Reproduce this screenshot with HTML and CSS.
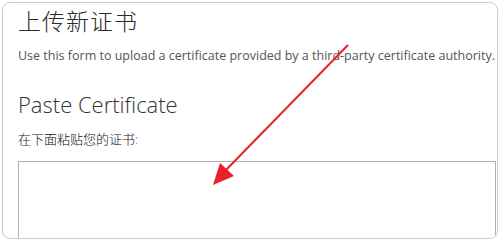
FILE: index.html
```html
<!DOCTYPE html>
<html>
<head>
<meta charset="utf-8">
<link rel="stylesheet" href="styles.css">
</head>
<body>
<div class="card">
  <h1 class="title">上传新证书</h1>
  <p class="desc">Use this form to upload a certificate provided by a third-party certificate authority.</p>
  <h2 class="section">Paste Certificate</h2>
  <label class="label" for="cert">在下面粘贴您的证书<span class="colon">:</span></label>
  <textarea id="cert" class="cert"></textarea>
</div>
<svg class="annot" width="500" height="240" viewBox="0 0 500 240">
  <line x1="348" y1="45" x2="224" y2="172" stroke="#e8212a" stroke-width="2"/>
  <polygon points="213,185 220,163 234,176" fill="#e8212a"/>
</svg>
</body>
</html>
```
FILE: styles.css
```css
html, body {
  margin: 0;
  padding: 0;
  background: #ffffff;
}
body {
  width: 500px;
  height: 240px;
  overflow: hidden;
  position: relative;
}
.card {
  box-sizing: border-box;
  margin: 2px 0 0 2px;
  width: 496px;
  height: 237px;
  border: 1px solid #cbc9dc;
  border-radius: 8px;
  padding: 0 0 0 15px;
  overflow: hidden;
  font-family: "Open Sans", "Noto Sans CJK SC", sans-serif;
  color: #333;
}
.title {
  margin: 2px 0 0 0;
  font-family: "Noto Sans CJK SC", sans-serif;
  font-weight: 300;
  font-size: 23px;
  line-height: 30px;
  letter-spacing: 1px;
  color: #2a2a2a;
}
.desc {
  margin: 13px 0 0 0;
  font-size: 12.5px;
  line-height: 16px;
  white-space: nowrap;
  color: #555;
}
.section {
  margin: 26px 0 0 0;
  font-weight: 300;
  font-size: 22px;
  line-height: 28px;
  color: #333;
}
.label {
  display: block;
  margin: 12px 0 0 0;
  font-family: "Noto Sans CJK SC", sans-serif;
  font-weight: 300;
  font-size: 13px;
  line-height: 18px;
  color: #111;
}
.colon {
  color: #999;
}
.cert {
  display: block;
  box-sizing: border-box;
  margin: 13px 0 0 0;
  width: 478px;
  height: 120px;
  border: 1px solid #b0b0b0;
  border-radius: 0;
  padding: 0;
  resize: none;
  background: #fff;
}
.annot {
  position: absolute;
  left: 0;
  top: 0;
  pointer-events: none;
}
```
